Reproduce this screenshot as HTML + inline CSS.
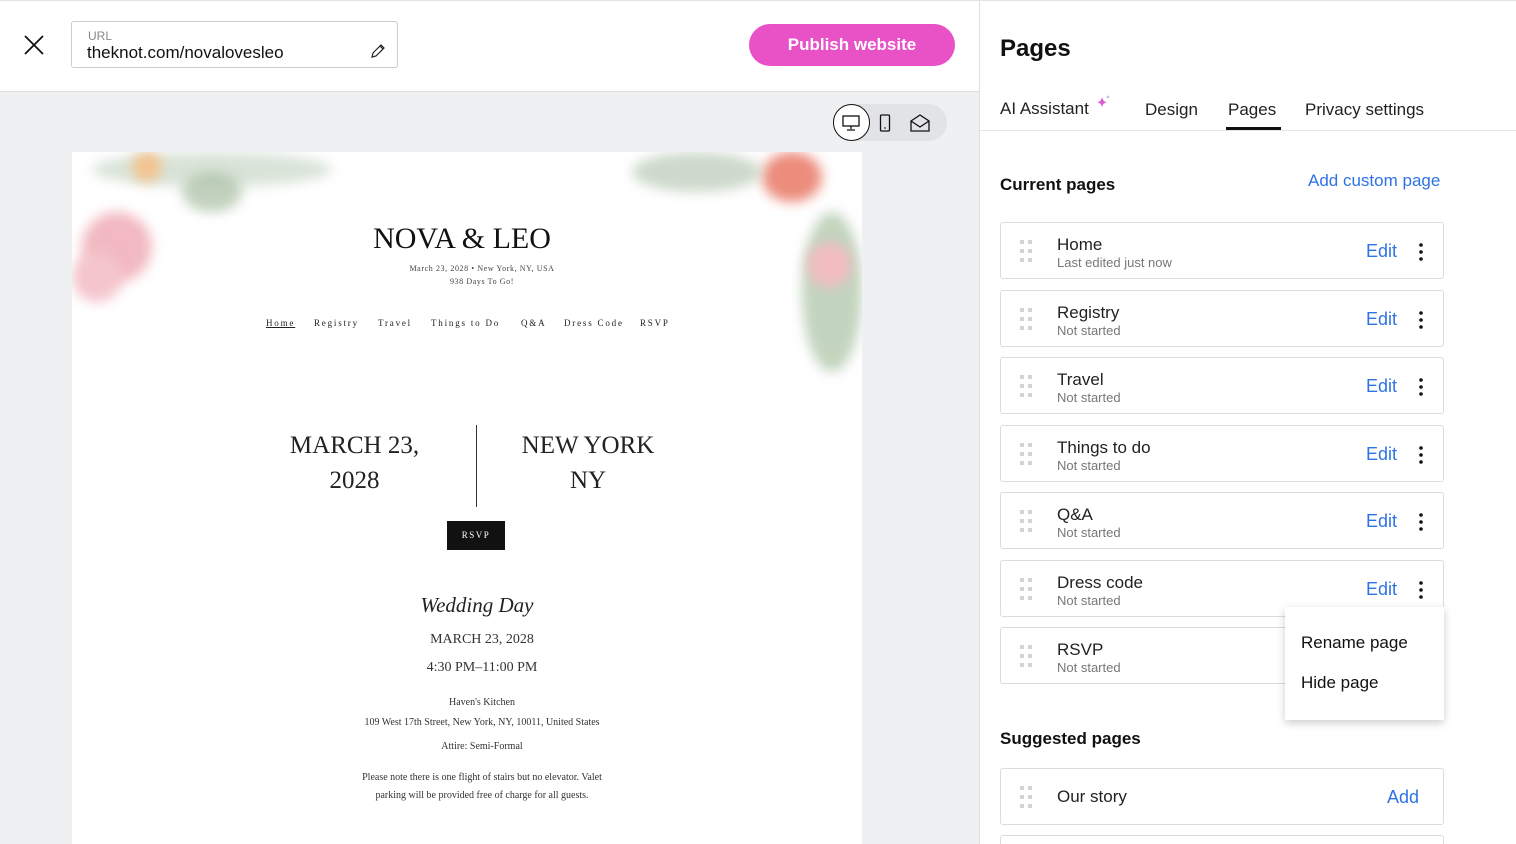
<!DOCTYPE html>
<html style="overflow:hidden;width:1516px;height:844px"><head><style>
*{box-sizing:border-box;margin:0;padding:0}
body{width:1516px;height:844px;overflow:hidden;font-family:"Liberation Sans",sans-serif;background:#fff;position:relative;color:#111}
.a{position:absolute}
.serif{font-family:"Liberation Serif",serif}
.row{position:absolute;left:1000px;width:444px;height:57px;border:1px solid #dcdcdf;border-radius:3px;background:#fff}
.row .dots{position:absolute;left:19px;top:17px;width:12px;height:22px}
.row .t{position:absolute;left:56px;top:12px;font-size:17px;color:#222}
.row .s{position:absolute;left:56px;top:32px;font-size:13px;color:#777}
.row .e{position:absolute;right:46px;top:18px;font-size:18px;color:#2e73e6}
.row .m{position:absolute;right:20px;top:20px;width:4px;height:18px}
.blob{position:absolute;border-radius:50%;filter:blur(6px)}
.nav span{position:absolute;top:0;white-space:nowrap}
</style></head><body>
<div class="a" style="left:0;top:0;width:1516px;height:1px;background:#e4e4e6"></div>
<svg class="a" style="left:24px;top:35px" width="20" height="20" viewBox="0 0 20 20"><path d="M1 1L19 19M19 1L1 19" stroke="#111" stroke-width="1.8"/></svg>
<div class="a" style="left:71px;top:21px;width:327px;height:47px;border:1px solid #ccc;border-radius:3px"></div>
<div class="a" style="left:88px;top:29px;font-size:12px;color:#888">URL</div>
<div class="a" style="left:87px;top:43px;font-size:17px;color:#111">theknot.com/novalovesleo</div>
<svg class="a" style="left:370px;top:43px" width="16" height="16" viewBox="0 0 16 16"><path d="M2 14L3 10L11 2L14 5L6 13Z M10 3L13 6" stroke="#222" stroke-width="1.2" fill="none"/></svg>
<div class="a" style="left:749px;top:24px;width:206px;height:42px;border-radius:21px;background:#e951c6;color:#fff;font-weight:bold;font-size:17px;text-align:center;line-height:42px">Publish website</div>
<div class="a" style="left:0;top:91px;width:979px;height:753px;background:#eff0f2;border-top:1px solid #e0e0e2"></div>
<div class="a" style="left:833px;top:104px;width:114px;height:37px;border-radius:19px;background:#e2e3e6"></div>
<div class="a" style="left:833px;top:104px;width:37px;height:37px;border-radius:50%;background:#fff;border:1.5px solid #111"></div>
<svg class="a" style="left:842px;top:115px" width="18" height="16" viewBox="0 0 18 16"><rect x="1" y="1" width="16" height="10" fill="none" stroke="#111" stroke-width="1.3"/><path d="M9 11V14M5 15H13" stroke="#111" stroke-width="1.3"/></svg>
<svg class="a" style="left:879px;top:114px" width="12" height="18" viewBox="0 0 12 18"><rect x="1.5" y="1" width="9" height="16" rx="1" fill="none" stroke="#111" stroke-width="1.3"/><path d="M5 14H7" stroke="#111"/></svg>
<svg class="a" style="left:910px;top:114px" width="20" height="18" viewBox="0 0 20 18"><path d="M1 7L10 1L19 7V17H1Z M1 7L10 13L19 7" fill="none" stroke="#111" stroke-width="1.3"/></svg>
<div class="a" style="left:72px;top:152px;width:790px;height:692px;background:#fff;overflow:hidden">
 <div class="blob" style="left:10px;top:60px;width:70px;height:70px;background:#f2b9c2"></div>
 <div class="blob" style="left:0;top:100px;width:50px;height:50px;background:#f4c5cc"></div>
 <div class="blob" style="left:20px;top:0;width:240px;height:35px;background:#c9d8c8;opacity:.7"></div>
 <div class="blob" style="left:60px;top:0;width:30px;height:30px;background:#f3c38f"></div>
 <div class="blob" style="left:110px;top:20px;width:60px;height:40px;background:#a9bfa4;opacity:.7"></div>
 <div class="blob" style="left:690px;top:0;width:60px;height:50px;background:#ec8c7c"></div>
 <div class="blob" style="left:560px;top:0;width:130px;height:40px;background:#b8cab5;opacity:.7"></div>
 <div class="blob" style="left:730px;top:60px;width:60px;height:160px;background:#a9c2a3;opacity:.7"></div>
 <div class="blob" style="left:735px;top:90px;width:45px;height:45px;background:#f2bcc0"></div>
 <div class="a serif" style="left:0;top:70px;width:780px;text-align:center;font-size:30px;color:#111">NOVA &amp; LEO</div>
 <div class="a serif" style="left:0;top:111px;width:820px;text-align:center;font-size:8px;letter-spacing:.6px;color:#444;line-height:12.5px">March 23, 2028 • New York, NY, USA<br>938 Days To Go!</div>
 <div class="a serif nav" style="left:0;top:166px;width:790px;height:14px;font-size:9px;letter-spacing:1.8px;color:#222">
  <span style="left:194px"><u>Home</u></span><span style="left:242px">Registry</span><span style="left:306px">Travel</span><span style="left:359px">Things to Do</span><span style="left:449px">Q&amp;A</span><span style="left:492px">Dress Code</span><span style="left:568px">RSVP</span>
 </div>
 <div class="a serif" style="left:190px;top:276px;width:185px;text-align:center;font-size:25px;line-height:35px;color:#222">MARCH 23,<br>2028</div>
 <div class="a" style="left:404px;top:273px;width:1px;height:82px;background:#333"></div>
 <div class="a serif" style="left:430px;top:276px;width:172px;text-align:center;font-size:25px;line-height:35px;color:#222">NEW YORK<br>NY</div>
 <div class="a serif" style="left:375px;top:369px;width:58px;height:29px;background:#111;color:#fff;font-size:9px;letter-spacing:1.5px;text-align:center;line-height:29px">RSVP</div>
 <div class="a serif" style="left:0;top:441px;width:810px;text-align:center;font-size:21px;font-style:italic;color:#222">Wedding Day</div>
 <div class="a serif" style="left:0;top:474px;width:820px;text-align:center;font-size:14px;color:#333;line-height:28px">MARCH 23, 2028<br>4:30 PM–11:00 PM</div>
 <div class="a serif" style="left:0;top:541px;width:820px;text-align:center;font-size:10px;color:#333;line-height:20px">Haven's Kitchen<br>109 West 17th Street, New York, NY, 10011, United States</div>
 <div class="a serif" style="left:0;top:589px;width:820px;text-align:center;font-size:10px;color:#333">Attire: Semi-Formal</div>
 <div class="a serif" style="left:0;top:617px;width:820px;text-align:center;font-size:10px;color:#333;line-height:18px">Please note there is one flight of stairs but no elevator. Valet<br>parking will be provided free of charge for all guests.</div>
</div>
<div class="a" style="left:979px;top:0;width:1px;height:844px;background:#e0e0e2"></div>
<div class="a" style="left:1000px;top:35px;font-size:24px;font-weight:bold">Pages</div>
<div class="a" style="left:1000px;top:99px;font-size:17px;color:#222">AI Assistant</div>
<svg class="a" style="left:1095px;top:94px" width="16" height="16" viewBox="0 0 16 16"><path d="M7 3Q8 8 12 8Q8 9 7 13Q6 9 2 8Q6 8 7 3Z" fill="#dc5fcf"/><path d="M13 1L13.5 2.5L15 3L13.5 3.5L13 5L12.5 3.5L11 3L12.5 2.5Z" fill="#a9a0f0"/></svg>
<div class="a" style="left:1145px;top:100px;font-size:17px;color:#222">Design</div>
<div class="a" style="left:1228px;top:100px;font-size:17px;color:#222">Pages</div>
<div class="a" style="left:1226px;top:127px;width:55px;height:4px;background:#111"></div>
<div class="a" style="left:1305px;top:100px;font-size:17px;color:#222">Privacy settings</div>
<div class="a" style="left:980px;top:130px;width:536px;height:1px;background:#e4e4e6"></div>
<div class="a" style="left:1000px;top:175px;font-size:17px;font-weight:bold">Current pages</div>
<div class="a" style="left:1308px;top:171px;font-size:17px;color:#2e73e6">Add custom page</div>

<svg width="0" height="0" style="position:absolute"><defs><g id="d"><rect x="0" y="0" width="4" height="4" fill="#d4d4d6"/><rect x="8" y="0" width="4" height="4" fill="#d4d4d6"/><rect x="0" y="9" width="4" height="4" fill="#d4d4d6"/><rect x="8" y="9" width="4" height="4" fill="#d4d4d6"/><rect x="0" y="18" width="4" height="4" fill="#d4d4d6"/><rect x="8" y="18" width="4" height="4" fill="#d4d4d6"/></g><g id="k"><circle cx="2" cy="2" r="1.8" fill="#111"/><circle cx="2" cy="9" r="1.8" fill="#111"/><circle cx="2" cy="16" r="1.8" fill="#111"/></g></defs></svg>

<div class="row" style="top:222px"><svg class="dots"><use href="#d"/></svg><div class="t">Home</div><div class="s">Last edited just now</div><div class="e">Edit</div><svg class="m"><use href="#k"/></svg></div>
<div class="row" style="top:290px"><svg class="dots"><use href="#d"/></svg><div class="t">Registry</div><div class="s">Not started</div><div class="e">Edit</div><svg class="m"><use href="#k"/></svg></div>
<div class="row" style="top:357px"><svg class="dots"><use href="#d"/></svg><div class="t">Travel</div><div class="s">Not started</div><div class="e">Edit</div><svg class="m"><use href="#k"/></svg></div>
<div class="row" style="top:425px"><svg class="dots"><use href="#d"/></svg><div class="t">Things to do</div><div class="s">Not started</div><div class="e">Edit</div><svg class="m"><use href="#k"/></svg></div>
<div class="row" style="top:492px"><svg class="dots"><use href="#d"/></svg><div class="t">Q&amp;A</div><div class="s">Not started</div><div class="e">Edit</div><svg class="m"><use href="#k"/></svg></div>
<div class="row" style="top:560px"><svg class="dots"><use href="#d"/></svg><div class="t">Dress code</div><div class="s">Not started</div><div class="e">Edit</div><svg class="m"><use href="#k"/></svg></div>
<div class="row" style="top:627px"><svg class="dots"><use href="#d"/></svg><div class="t">RSVP</div><div class="s">Not started</div></div>
<div class="a" style="left:1285px;top:607px;width:159px;height:113px;background:#fff;box-shadow:0 3px 8px rgba(0,0,0,.2)"></div>
<div class="a" style="left:1301px;top:633px;font-size:17px;color:#111">Rename page</div>
<div class="a" style="left:1301px;top:673px;font-size:17px;color:#111">Hide page</div>
<div class="a" style="left:1000px;top:729px;font-size:17px;font-weight:bold">Suggested pages</div>
<div class="row" style="top:768px"><svg class="dots"><use href="#d"/></svg><div class="t" style="top:18px">Our story</div><div class="e" style="right:24px">Add</div></div>
<div class="row" style="top:835px;height:9px;border-bottom:none;border-radius:3px 3px 0 0"></div>
</body></html>
